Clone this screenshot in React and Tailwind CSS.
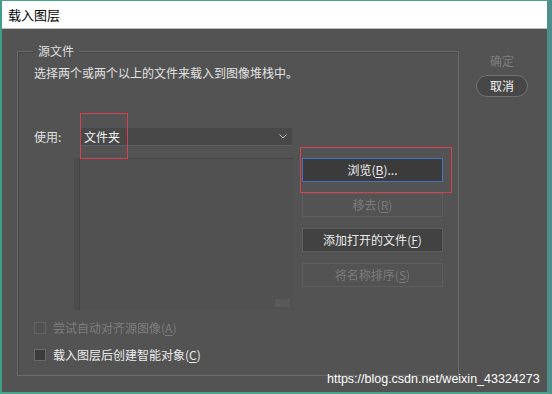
import React from 'react'

const font = { fontFamily: '"Microsoft YaHei", "Noto Sans CJK SC", "Liberation Sans", sans-serif' }

function Key({ k }) {
  return (
    <>
      (<span className="underline underline-offset-2">{k}</span>)
    </>
  )
}

function PsButton({ children, disabled, focused }) {
  if (focused) {
    return (
      <div className="h-[24px] w-[141px] flex items-center justify-center bg-[#3b3b3b] border border-[#4f73a8] shadow-[inset_0_0_0_1px_#2f3d55] text-[12px] text-[#f0f0f0]">
        {children}
      </div>
    )
  }
  return (
    <div
      className={
        disabled
          ? 'h-[24px] w-[141px] flex items-center justify-center border border-[#5d5d5d] bg-[#535353] text-[12px] text-[#7c7c7c]'
          : 'h-[24px] w-[141px] flex items-center justify-center border border-[#5f5f5f] bg-[#424242] text-[12px] text-[#ececec]'
      }
    >
      {children}
    </div>
  )
}

function Check({ label, disabled }) {
  return (
    <div className="flex items-center h-[16px]">
      <div
        className={
          disabled
            ? 'w-[12px] h-[12px] border border-[#666] bg-[#535353]'
            : 'w-[12px] h-[12px] border border-[#6a6a6a] bg-[#3c3c3c]'
        }
      />
      <span className={disabled ? 'ml-[7px] text-[12px] text-[#7d7d7d]' : 'ml-[7px] text-[12px] text-[#ececec]'}>
        {label}
      </span>
    </div>
  )
}

export default function App() {
  return (
    <div style={font} className="relative w-[552px] h-[394px] bg-[#535353] border-t border-b-2 border-l-2 border-r-[5px] border-t-[#49a48e] border-b-[#49a48e] border-l-[#3f9e86] border-r-[#4e8f8c] overflow-hidden">
      {/* Title bar */}
      <div className="h-[28px] bg-white flex items-center pl-[6px] border-b border-[#bdbdbd]">
        <span className="text-[13px] text-black">载入图层</span>
      </div>

      <div className="flex pl-[15px] pt-[22px]">
        {/* Group box */}
        <div className="relative w-[442px] h-[325px] border border-[#6a6a6a] shadow-[inset_1px_1px_0_#464646]">
          <span className="absolute -top-[9px] left-[15px] px-[5px] bg-[#535353] text-[12px] leading-[16px] text-[#dedede]">
            源文件
          </span>

          <div className="pl-[16px] pt-[13px]">
            <div className="text-[12px] leading-[16px] text-[#e2e2e2]">选择两个或两个以上的文件来载入到图像堆栈中。</div>

            <div className="flex items-center mt-[47px] h-[18px]">
              <span className="w-[46px] text-[12px] text-[#e2e2e2]">使用:</span>
              <div className="relative w-[212px] h-[18px] flex items-center justify-between bg-[#484848] border-b border-[#5e5e5e] pl-[4px] pr-[5px]">
                <span className="text-[12px] text-[#f2f2f2]">文件夹</span>
                <svg width="8" height="5" viewBox="0 0 8 5" className="text-[#bdbdbd]">
                  <path d="M0.5 0.5 L4 4 L7.5 0.5" fill="none" stroke="currentColor" strokeWidth="1" />
                </svg>
              </div>
            </div>

            <div className="flex mt-[12px]">
              <div className="w-[214px] h-[152px] ml-[45px] border-l border-t border-[#444] shadow-[-5px_0_0_#4d4d4d] bg-[#515151] relative">
                <div className="absolute right-[3px] bottom-[3px] w-[15px] h-[8px] bg-[#595959]" />
              </div>
              <div className="ml-[9px] flex flex-col gap-[11px]">
                <PsButton focused>
                  浏览<Key k="B" />...
                </PsButton>
                <PsButton disabled>
                  移去<Key k="R" />
                </PsButton>
                <PsButton>
                  添加打开的文件<Key k="F" />
                </PsButton>
                <PsButton disabled>
                  将名称排序<Key k="S" />
                </PsButton>
              </div>
            </div>

            <div className="mt-[10px] flex flex-col gap-[11px]">
              <Check disabled label={<>尝试自动对齐源图像<Key k="A" /></>} />
              <Check label={<>载入图层后创建智能对象<Key k="C" /></>} />
            </div>
          </div>
        </div>

        {/* Right column */}
        <div className="ml-[17px] w-[52px] flex flex-col items-center">
          <div className="mt-[1px] h-[18px] flex items-center text-[12px] text-[#7d7d7d]">确定</div>
          <div className="mt-[5px] w-[52px] h-[22px] rounded-[11px] border border-[#717171] bg-[#474747] flex items-center justify-center text-[12px] text-[#f2f2f2]">
            取消
          </div>
        </div>
      </div>

      {/* annotation rectangles */}
      <div className="absolute left-[78px] top-[112px] w-[48px] h-[46px] border border-[#d8404f]" />
      <div className="absolute left-[298px] top-[146px] w-[152px] h-[46px] border border-[#d8404f]" />

      {/* watermark */}
      <div className="absolute left-[325px] top-[369px] text-[12.5px] text-white" style={{ fontFamily: '"Liberation Sans", Arial, sans-serif' }}>
        https://blog.csdn.net/weixin_43324273
      </div>
    </div>
  )
}
